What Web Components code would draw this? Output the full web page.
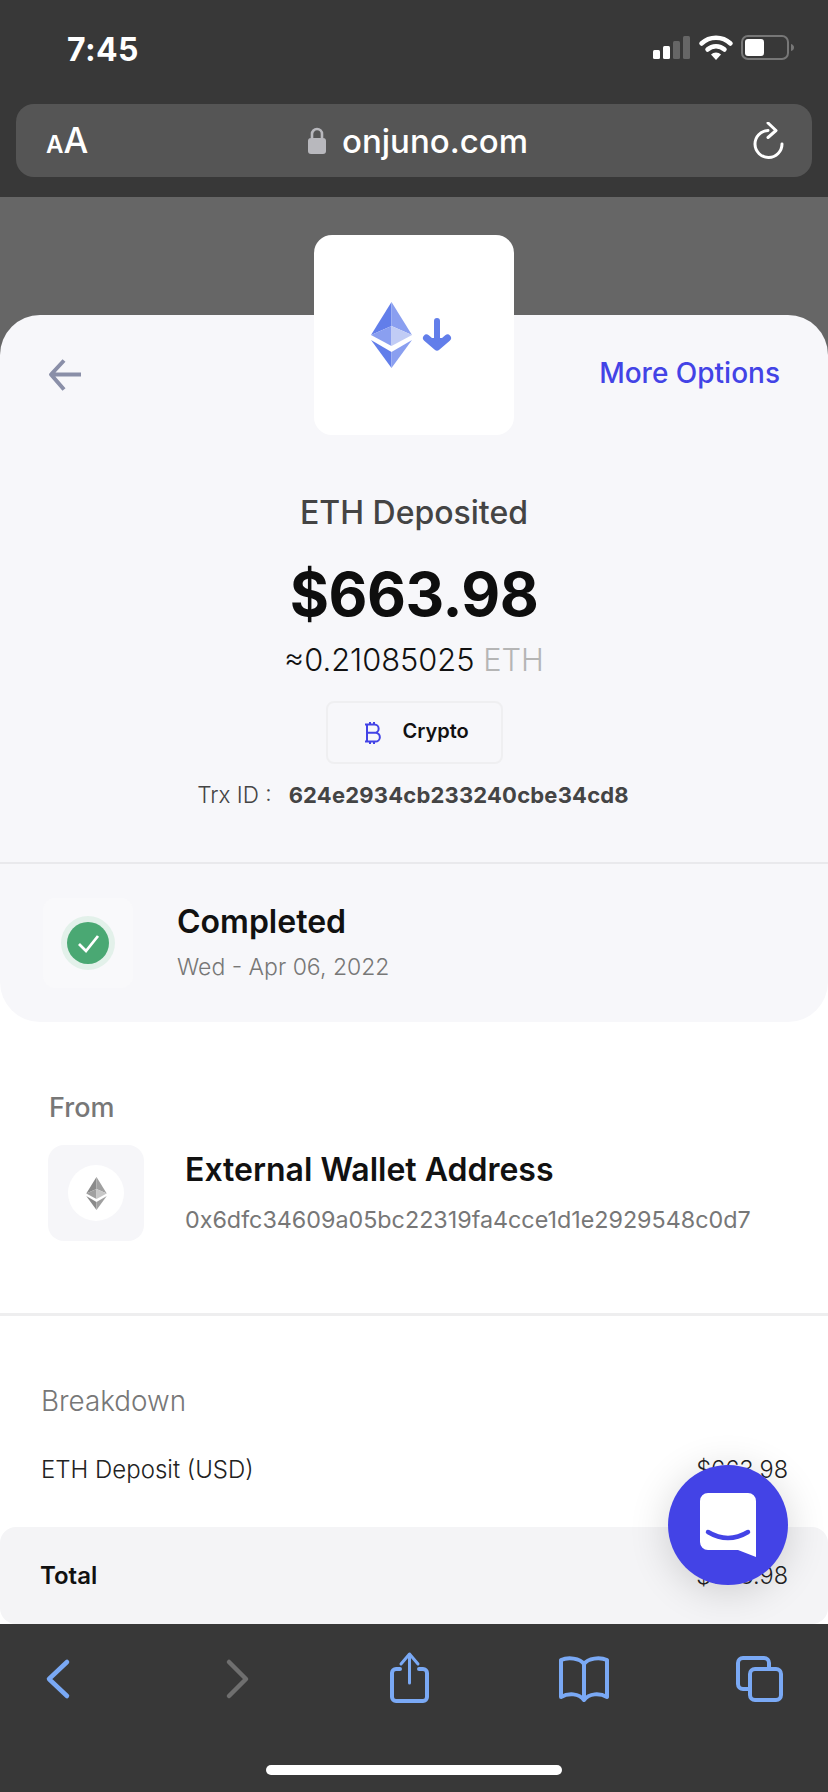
<!DOCTYPE html>
<html lang="en">
<head>
<meta charset="utf-8">
<title>ETH Deposited</title>
<style>
html,body{margin:0;padding:0;background:#383838}
body{font-family:Inter,"Noto Sans",sans-serif}
</style>
</head>
<body>
<juno-app></juno-app>
<script>
function def(name, html){
  customElements.define(name, class extends HTMLElement{
    constructor(){super();this.attachShadow({mode:'open'}).innerHTML=html;}
  });
}
def('status-bar',`<style>
:host{display:flex;height:104px;box-sizing:border-box;padding:30px 33px 0 67px;justify-content:space-between;background:#383838;color:#fff}
.t{font:700 32px/40px Inter,sans-serif;letter-spacing:.4px}
svg{display:block;margin-top:3px}
</style><span class="t">7:45</span>
<svg width="142" height="30" viewBox="653 35 142 30">
<rect x="653" y="52" width="7" height="9" rx="1.5" fill="#fff"/>
<rect x="663" y="48" width="7" height="13" rx="1.5" fill="#fff"/>
<rect x="673" y="43" width="7" height="18" rx="1.5" fill="#666"/>
<rect x="683" y="38" width="7" height="23" rx="1.5" fill="#666"/>
<path d="M701.500 45.500a21 21 0 0 1 29 0M707.500 51.500a12.500 12.500 0 0 1 17 0" fill="none" stroke="#fff" stroke-width="4.500" stroke-linecap="round"/>
<path d="M711 56.500a7 7 0 0 1 10 0l-5 5.500z" fill="#fff"/>
<rect x="742" y="38" width="46" height="23" rx="6" fill="none" stroke="#777" stroke-width="2"/>
<rect x="745" y="41" width="19" height="17" rx="3" fill="#fff"/>
<path d="M791 46q3 1 3 3.500t-3 3.500z" fill="#777"/>
</svg>`);
def('address-bar',`<style>
:host{display:block;background:#383838;padding:0 16px 20px;height:93px;box-sizing:border-box}
.b{height:73px;background:#555;border-radius:18px;display:grid;grid-template-columns:1fr auto 1fr;align-items:center;color:#fff;padding:0 28px 0 30px}
.aa{font-family:Inter,sans-serif;font-weight:600;line-height:1}
.aa .s{font-size:24px}.aa .l{font-size:35px;font-weight:500}
.c{display:flex;align-items:center;gap:16px;font:500 33px/40px Inter,sans-serif;margin-left:6px}
.r{justify-self:end}
svg{display:block}
</style><div class="b"><div class="aa"><span class="s">A</span><span class="l">A</span></div>
<div class="c"><svg width="18" height="27" viewBox="0 0 18 27"><path d="M4 11V7a5 5 0 0 1 10 0v4" fill="none" stroke="#b8b8bd" stroke-width="2.600"/><rect y="11" width="18" height="16" rx="3" fill="#b8b8bd"/></svg><span>onjuno.com</span></div>
<svg class="r" width="31" height="37" viewBox="0 0 31 37"><path d="M15 8.500A13.500 13.500 0 1 0 29 22" fill="none" stroke="#fff" stroke-width="3" stroke-linecap="round"/><path d="M15 1l8 7.500-8 7" fill="none" stroke="#fff" stroke-width="3" stroke-linecap="round" stroke-linejoin="round"/></svg></div>`);
def('tx-hero',`<style>
:host{display:block;text-align:center;border-bottom:2px solid #e9e9ec;color:#111;padding-bottom:52px}
.top{display:grid;grid-template-columns:1fr 200px 1fr;height:120px}
.tile{width:200px;height:200px;margin-top:-80px;background:#fff;border-radius:18px}
.tile svg{display:block}
.back{padding:44px 0 0 48px;text-align:left}
.back svg{display:block}
.more{text-align:right;padding:40px 48px 0 0;font:500 28px/36px Inter,sans-serif;color:#4343e6;white-space:nowrap}
h1{margin:60px 0 0;font:500 32px/36px Inter,sans-serif;color:#444}
.amt{margin-top:25px;font:700 60px/76px Inter,sans-serif;color:#0e0e0e;letter-spacing:-.5px}
.eth{margin-top:8px;font:300 30.800px/40px Inter,sans-serif;color:#111}
.eth span{color:#b5b5b5}
.pill{display:flex;width:177px;height:63px;box-sizing:border-box;margin:21px auto 0;border:2px solid #efeff1;border-radius:8px;align-items:center;padding:0 0 0 35px;gap:21px;font:600 20px/24px Inter,sans-serif;color:#111}
.pill span{margin-top:-4px}
.trx{margin-top:16px;font:300 22.500px/30px Inter,sans-serif;color:#444;display:flex;justify-content:center;gap:17px;padding-right:2px}
.trx b{font-weight:700;letter-spacing:.2px;font-size:22px}
</style>
<div class="top">
<div class="back"><svg width="34" height="34" viewBox="0 0 34 34"><path d="M33 15.500H3M16 1.500L3 15.500l13 15" fill="none" stroke="#8a8fa8" stroke-width="4" stroke-linejoin="round"/></svg></div>
<div class="tile"><svg width="200" height="200" viewBox="0 0 200 200">
<g transform="translate(57 67)">
<path d="M20.500 0L0 33l20.500-9z" fill="#627eea"/><path d="M20.500 0L41 33l-20.500-9z" fill="#8a9ff0"/>
<path d="M0 33l20.500-9v20z" fill="#8a9ff0"/><path d="M41 33l-20.500-9v20z" fill="#c1ccf5"/>
<path d="M0 38l20.500 12v16z" fill="#627eea"/><path d="M41 38l-20.500 12v16z" fill="#8a9ff0"/>
</g>
<path d="M123 86v24" fill="none" stroke="#627eea" stroke-width="6" stroke-linecap="round"/>
<path d="M112.500 103l10.500 9 10.500-9" fill="#627eea" stroke="#627eea" stroke-width="7" stroke-linecap="round" stroke-linejoin="round"/>
</svg></div>
<div class="more">More Options</div>
</div>
<h1>ETH Deposited</h1>
<div class="amt">$663.98</div>
<div class="eth">≈0.21085025 <span>ETH</span></div>
<div class="pill"><svg width="19" height="24" viewBox="0 0 19 24"><path d="M4 3.500h7.500a4 4 0 0 1 0 8.300H4zM4 11.800h8.500a4.300 4.300 0 0 1 0 8.700H4zM2 3.500h2M2 20.500h2M4 3.500v17M7 1v2.500M11 1v2.500M7 20.500V23M11 20.500V23" fill="none" stroke="#4343e6" stroke-width="2"/></svg><span>Crypto</span></div>
<div class="trx"><span>Trx ID :</span><b>624e2934cb233240cbe34cd8</b></div>`);
def('tx-status',`<style>
:host{display:flex;height:158px;box-sizing:border-box;padding:34px 0 0 43px;gap:44px;align-items:flex-start}
.tile{width:90px;height:90px;border-radius:12px;background:#f9f9fb;display:flex;align-items:center;justify-content:center}
svg{display:block}
.txt{padding-top:4px}
.a{font:600 32px/40px Inter,sans-serif;color:#111}
.b{margin-top:10px;font:300 23px/30px Inter,sans-serif;color:#777}
</style>
<div class="tile"><svg width="54" height="54" viewBox="0 0 54 54"><circle cx="27" cy="27" r="27" fill="#e3f1ea"/><circle cx="27" cy="27" r="21" fill="#4aa873"/><path d="M18 28l7 7 12-15" fill="none" stroke="#fff" stroke-width="2.800"/></svg></div>
<div class="txt"><div class="a">Completed</div><div class="b">Wed - Apr 06, 2022</div></div>`);
def('tx-card',`<style>
:host{display:block;background:#f7f7fa;border-radius:40px}
</style><slot></slot>`);
def('from-section',`<style>
:host{display:block;padding:68px 0 72px 48px;border-bottom:3px solid #eeeeef}
.l{font:500 27px/36px Inter,sans-serif;color:#777;margin-left:1px}
.row{display:flex;margin-top:19px;gap:41px}
.tile{width:96px;height:96px;border-radius:16px;background:#f6f6f9;display:flex;align-items:center;justify-content:center}
.circ{width:56px;height:56px;border-radius:50%;background:#fff;display:flex;align-items:center;justify-content:center}
svg{display:block}
.txt{padding-top:5px}
.a{font:600 32px/40px Inter,sans-serif;color:#111}
.b{margin-top:15px;font:400 23.300px/30px Inter,sans-serif;color:#777;white-space:nowrap}
</style>
<div class="l">From</div>
<div class="row"><div class="tile"><div class="circ"><svg width="21" height="33" viewBox="0 0 41 66">
<path d="M20.500 0L0 33l20.500-9z" fill="#8a8a8a"/><path d="M20.500 0L41 33l-20.500-9z" fill="#a0a0a0"/>
<path d="M0 33l20.500-9v20z" fill="#a0a0a0"/><path d="M41 33l-20.500-9v20z" fill="#c8c8c8"/>
<path d="M0 38l20.500 12v16z" fill="#8a8a8a"/><path d="M41 38l-20.500 12v16z" fill="#a0a0a0"/></svg></div></div>
<div class="txt"><div class="a">External Wallet Address</div><div class="b">0x6dfc34609a05bc22319fa4cce1d1e2929548c0d7</div></div></div>`);
def('break-down',`<style>
:host{display:block;padding-top:67px;color:#111}
.h{font:300 27.800px/36px Inter,sans-serif;color:#777;padding-left:41px}
.r{display:flex;justify-content:space-between;padding:0 40px 0 41px;font:300 24px/32px Inter,sans-serif;margin-top:35px;color:#222}
.t{display:flex;justify-content:space-between;align-items:center;height:97px;box-sizing:border-box;margin-top:41px;padding:0 40px 0 40px;background:#f4f4f6;border-radius:16px;font:300 24px/32px Inter,sans-serif;color:#222}
.t b{font-weight:600;color:#111}
.p{font-size:23.500px}
</style>
<div class="h">Breakdown</div>
<div class="r"><span>ETH Deposit (USD)</span><span class="p">$663.98</span></div>
<div class="t"><b>Total</b><span class="p">$663.98</span></div>`);
def('chat-fab',`<style>
:host{position:absolute;left:668px;top:1465px;width:120px;height:120px;border-radius:50%;background:#4343e6;box-shadow:0 6px 40px rgba(0,0,0,.16);display:flex;align-items:center;justify-content:center}
svg{display:block}
</style><svg width="56" height="64" viewBox="0 0 56 64"><path d="M8 0h40a8 8 0 0 1 8 8v56l-18-7H8a8 8 0 0 1-8-8V8a8 8 0 0 1 8-8z" fill="#fff"/><path d="M8 39q20 12 40 0" fill="none" stroke="#4343e6" stroke-width="4.500" stroke-linecap="round"/></svg>`);
def('safari-toolbar',`<style>
:host{display:flex;flex-direction:column;height:168px;box-sizing:border-box;background:#383838;padding-top:27px}
.icons{display:flex}
svg{display:block;flex:none}
svg:nth-child(1){margin-left:30px}
svg:nth-child(2){margin-left:123px}
svg:nth-child(3){margin-left:116px}
svg:nth-child(4){margin-left:119px}
svg:nth-child(5){margin-left:120px}
.home{width:296px;height:10px;border-radius:5px;background:#fff;margin:58px auto 0 266px}
</style>
<div class="icons">
<svg width="56" height="56" viewBox="0 0 56 56" fill="none" stroke="#7aa9f5" stroke-width="4.500" stroke-linecap="round" stroke-linejoin="round"><path d="M37 11L19 28l18 17"/></svg>
<svg width="56" height="56" viewBox="0 0 56 56" fill="none" stroke="#6f6f6f" stroke-width="4.500" stroke-linecap="round" stroke-linejoin="round"><path d="M20 11l17 17-17 17"/></svg>
<svg width="56" height="56" viewBox="0 0 56 56" fill="none" stroke="#7aa9f5" stroke-linecap="round" stroke-linejoin="round"><path d="M19 18h-4a4 4 0 0 0-4 4v24a4 4 0 0 0 4 4h27a4 4 0 0 0 4-4V22a4 4 0 0 0-4-4h-4" stroke-width="4"/><path d="M28.500 32V4M20 13l8.500-10 8.500 10" stroke-width="3"/></svg>
<svg width="56" height="56" viewBox="0 0 56 56" fill="none" stroke="#7aa9f5" stroke-width="4" stroke-linecap="round" stroke-linejoin="round"><path d="M28 13C24 7 12 6 5 9v37c7-4 18-4 23 3 5-7 16-7 23-3V9c-7-3-19-2-23 4zM28 13v36"/></svg>
<svg width="56" height="56" viewBox="0 0 56 56" fill="none" stroke="#7aa9f5" stroke-width="4" stroke-linejoin="round"><path d="M37 16v-4a5 5 0 0 0-5-5H11a5 5 0 0 0-5 5v21a5 5 0 0 0 5 5h5"/><rect x="18" y="18" width="31" height="31" rx="5"/></svg>
</div><div class="home"></div>`);
def('juno-app',`<style>
:host{display:flex;flex-direction:column;position:relative;width:828px;height:1792px;overflow:hidden;background:#383838}
.page{height:1427px;overflow:hidden;background:#fff;position:relative;flex:none}
.dim{background:#666;height:196px;margin-bottom:-78px}
tx-card{position:relative}
</style>
<status-bar></status-bar><address-bar></address-bar>
<div class="page"><div class="dim"></div>
<tx-card><tx-hero></tx-hero><tx-status></tx-status></tx-card>
<from-section></from-section><break-down></break-down></div>
<safari-toolbar></safari-toolbar><chat-fab></chat-fab>`);
</script>
</body>
</html>
